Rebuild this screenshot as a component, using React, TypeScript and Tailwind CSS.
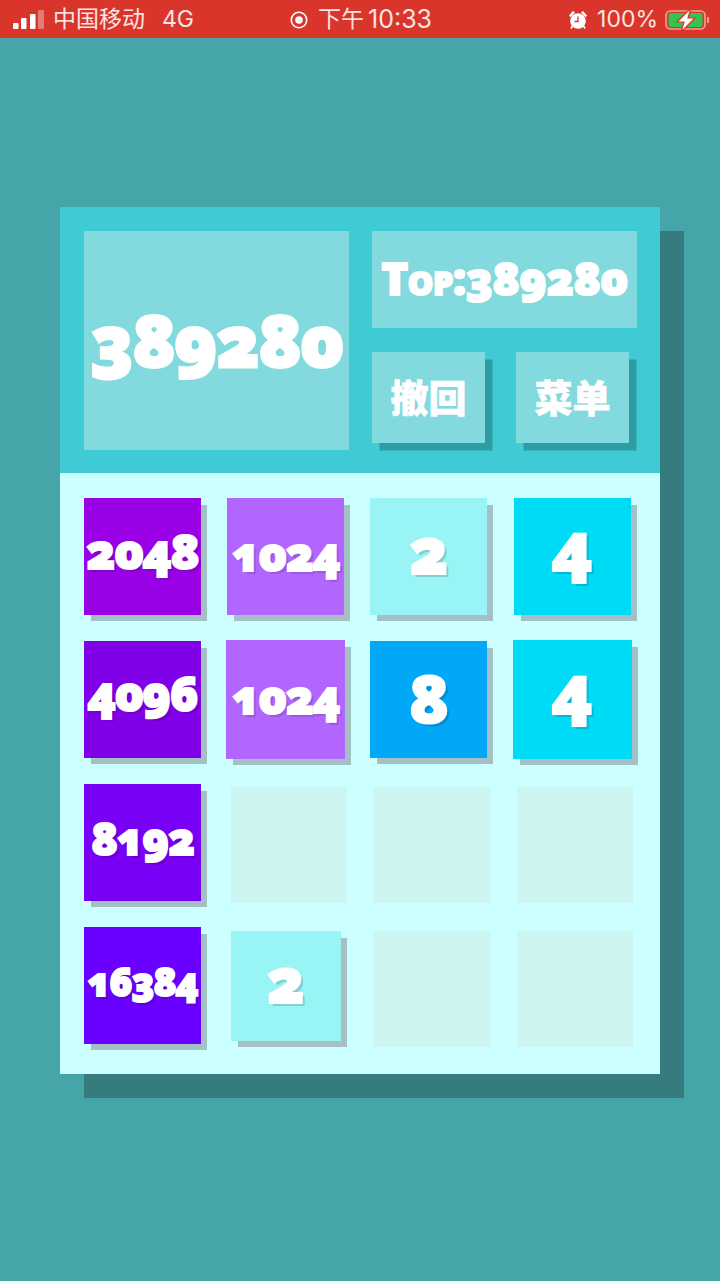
const font = "[font-family:'Open_Sans','Noto_Sans_CJK_SC',sans-serif]";

function Tile({ v, bg, size, cls = "" }: { v: string; bg: string; size: string; cls?: string }) {
  return (
    <div className={`flex items-center justify-center leading-none text-white font-extrabold shadow-[6.5px_6.5px_0_-0.5px_#a3c0c4] [-webkit-text-stroke:2px_white] [font-variant-numeric:oldstyle-nums] [text-shadow:3px_3px_0_rgba(0,0,0,0.15)] ${bg} ${size} ${cls || "h-[117px] w-[117px]"}`}>
      {v}
    </div>
  );
}

function Empty({ cls = "mt-[3px]" }: { cls?: string }) {
  return <div className={`ml-[3.6px] h-[116px] w-[116px] bg-[#ccf5f2] ${cls}`} />;
}

export default function App() {
  return (
    <div className={`flex h-[1281px] w-[720px] flex-col bg-[#45a5a8] ${font}`}>
      <div className="flex h-[38px] items-center bg-[#d9352b] pt-[1px] text-[23px] leading-none text-[#fbe4e2] [font-family:'Inter','Noto_Sans_CJK_SC',sans-serif]">
        <div className="flex flex-1 items-center pl-[13px]">
          <svg width="31" height="20" viewBox="0 0 31 20">
            <rect x="0" y="13" width="5.5" height="6" rx="1" fill="#fff" />
            <rect x="8" y="8" width="5.5" height="11" rx="1" fill="#fff" />
            <rect x="17" y="4" width="5.5" height="15" rx="1" fill="#fff" />
            <rect x="25" y="0" width="6" height="19" rx="1" fill="#fff" opacity="0.35" />
          </svg>
          <span className="ml-[9px]">中国移动</span>
          <span className="ml-[17px]">4G</span>
        </div>
        <div className="flex items-center">
          <svg width="18" height="18" viewBox="0 0 18 18">
            <circle cx="9" cy="9" r="7.7" fill="none" stroke="#fff" strokeWidth="1.6" />
            <circle cx="9" cy="9" r="3.8" fill="#fff" />
          </svg>
          <span className="ml-[10px]">下午</span>
          <span className="ml-[4px] text-[25px]">10:33</span>
        </div>
        <div className="flex flex-1 items-center justify-end pr-[11px]">
          <svg width="20" height="20" viewBox="0 0 20 20">
            <circle cx="10" cy="11" r="7.8" fill="#fff" />
            <path d="M10 6.5V11.5H6.5" fill="none" stroke="#d9352b" strokeWidth="1.3" />
            <path d="M1 5.5L5 1L7 2.6L2.4 7.2ZM19 5.5L15 1L13 2.6L17.6 7.2Z" fill="#fff" />
            <path d="M4.5 16L3 18.5M15.5 16L17 18.5" stroke="#fff" strokeWidth="1.6" />
          </svg>
          <span className="ml-[9px]">100%</span>
          <svg className="ml-[7px]" width="44" height="24" viewBox="0 0 44 24">
            <rect x="1" y="3" width="39" height="18" rx="4.5" fill="none" stroke="#f0a09a" strokeWidth="1.6" />
            <rect x="3.5" y="5" width="34" height="14" rx="2" fill="#34c44f" />
            <rect x="42" y="9" width="2" height="6" rx="1" fill="#f0a09a" />
            <path d="M26 0L12 14H19L16 24L30 10H23Z" fill="#fff" stroke="#d9352b" strokeWidth="1.2" />
          </svg>
        </div>
      </div>

      <div className="ml-[60px] mt-[169px] w-[600px] shadow-[24px_24px_0_#367c7e]">
        <div className="flex h-[266px] gap-[23px] bg-[#3fcbd3] pl-6 pt-6">
          <div className="flex h-[219px] w-[265px] items-center justify-center bg-[#82d9de] pb-[3px] text-[71px] leading-none font-extrabold tracking-[-1px] text-white [-webkit-text-stroke:3px_white] [font-variant-numeric:oldstyle-nums]">
            389280
          </div>
          <div className="flex w-[265px] flex-col gap-6">
            <div className="flex h-[97px] items-center justify-center bg-[#82d9de] pb-[5px] text-[45px] leading-none font-extrabold tracking-[-0.3px] text-white [-webkit-text-stroke:2px_white] [font-variant-caps:small-caps] [font-variant-numeric:oldstyle-nums]">
              Top:389280
            </div>
            <div className="flex gap-[31px]">
              <div className="flex h-[91px] w-[113px] items-center justify-center bg-[#82d9de] text-[38px] font-black text-white shadow-[7.5px_7.5px_0_#2f9ca4] [-webkit-text-stroke:0.6px_white]">撤回</div>
              <div className="flex h-[91px] w-[113px] items-center justify-center bg-[#82d9de] text-[38px] font-black text-white shadow-[7.5px_7.5px_0_#2f9ca4] [-webkit-text-stroke:0.6px_white]">菜单</div>
            </div>
          </div>
        </div>
        <div className="grid h-[601px] grid-cols-[repeat(4,117px)] grid-rows-[repeat(4,117px)] content-start gap-x-[26.2px] gap-y-[26.1px] bg-[#ccffff] pl-6 pt-[25px]">
          <Tile v="2048" bg="bg-[#9900e6]" size="pb-[12px] text-[48px] tracking-[-1px]" />
          <Tile v="1024" bg="bg-[#b266ff]" size="pb-[8px] text-[46px] tracking-[-1px]" />
          <Tile v="2" bg="bg-[#99f5f5]" size="pb-[14px] text-[64px]" />
          <Tile v="4" bg="bg-[#00dbf5]" size="pb-[22px] text-[68px]" />
          <Tile v="4096" bg="bg-[#8000e8]" size="pb-[12px] text-[47px] tracking-[-1px]" />
          <Tile v="1024" bg="bg-[#b266ff]" size="pb-[8px] text-[46px] tracking-[-1px]" cls="-m-px h-[119px] w-[119px]" />
          <Tile v="8" bg="bg-[#00a8f7]" size="pb-[6px] text-[66px]" />
          <Tile v="4" bg="bg-[#00dbf5]" size="pb-[22px] text-[68px]" cls="-m-px h-[119px] w-[119px]" />
          <Tile v="8192" bg="bg-[#7700f5]" size="pb-[10px] text-[44px] tracking-[-1px]" />
          <Empty />
          <Empty />
          <Empty />
          <Tile v="16384" bg="bg-[#6a00ff]" size="pb-[10px] text-[38px] tracking-[-1px]" />
          <Tile v="2" bg="bg-[#99f5f5]" size="pb-[14px] text-[62px]" cls="ml-[3.6px] mt-[4px] h-[110px] w-[110px]" />
          <Empty cls="mt-[4px]" />
          <Empty cls="mt-[4px]" />
        </div>
      </div>
    </div>
  );
}
